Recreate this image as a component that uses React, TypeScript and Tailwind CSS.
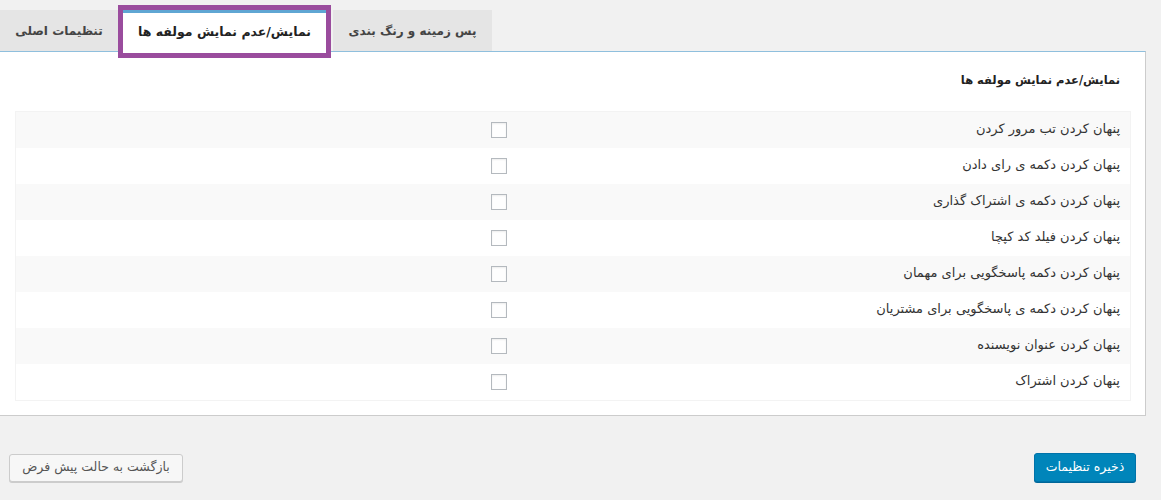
import React from 'react'

const rows = [
  'پنهان کردن تب مرور کردن',
  'پنهان کردن دکمه ی رای دادن',
  'پنهان کردن دکمه ی اشتراک گذاری',
  'پنهان کردن فیلد کد کپچا',
  'پنهان کردن دکمه پاسخگویی برای مهمان',
  'پنهان کردن دکمه ی پاسخگویی برای مشتریان',
  'پنهان کردن عنوان نویسنده',
  'پنهان کردن اشتراک',
]

const font = { fontFamily: '"DejaVu Sans", Tahoma, sans-serif' }

export default function App() {
  return (
    <div className="min-h-[500px] w-[1161px] bg-[#f1f1f1] text-[#333]" style={font}>
      {/* tabs */}
      <div className="flex items-end h-[51px] pt-[10px]">
        <div className="h-[41px] w-[118px] flex items-center justify-center bg-[#e5e5e5] text-[12px] font-bold text-[#444]">
          تنظیمات اصلی
        </div>
        <div className="relative ml-[4px] -mb-px h-[42px] w-[205px] flex items-center justify-center bg-white border-t-[3px] border-[#5fa6d3] text-[12.5px] font-bold text-[#222]">
          نمایش/عدم نمایش مولفه ها
          <div className="absolute left-[-4px] right-[-4px] top-[-8px] bottom-[-6px] border-[5px] border-[#9a4c9d]" />
        </div>
        <div className="ml-[6px] h-[41px] w-[159px] flex items-center justify-center bg-[#e5e5e5] text-[12px] font-bold text-[#444]">
          پس زمینه و رنگ بندی
        </div>
      </div>

      {/* panel */}
      <div dir="rtl" className="w-[1146px] bg-white border-t border-t-[#8fbfdd] border-r border-r-[#ccc] border-b border-b-[#ccc] pb-[14px]">
        <div className="h-[59px] flex items-center pr-[25px] pb-[2px] text-[11.5px] font-bold text-[#222]">
          نمایش/عدم نمایش مولفه ها
        </div>
        <div className="mr-[14px] w-[1116px] border border-[#f3f3f3]">
          {rows.map((r, i) => (
            <div key={r} className={`flex items-center h-[36px] ${i % 2 === 0 ? 'bg-[#f9f9f9]' : 'bg-white'}`}>
              <div className="w-[622px] pr-[10px] pb-[3px] text-[13px] text-[#333]">{r}</div>
              <div className="pr-[1px]">
                <div className="w-[16px] h-[16px] border border-[#b4b9be] bg-[#fefefe] shadow-[inset_0_1px_2px_rgba(0,0,0,0.07)]" />
              </div>
            </div>
          ))}
        </div>
      </div>

      {/* buttons */}
      <div dir="rtl" className="flex justify-between items-center mt-[37px] pr-[25px] pl-[9px]">
        <button className="h-[29px] w-[102px] rounded-[3px] bg-[#0085ba] border border-[#0073aa] text-white text-[12.5px] shadow-[0_1px_0_#006799]">
          ذخیره تنظیمات
        </button>
        <button className="h-[28px] w-[174px] rounded-[3px] bg-[#f7f7f7] border border-[#ccc] text-[#555] text-[12.5px] shadow-[0_1px_0_#ccc]">
          بازگشت به حالت پیش فرض
        </button>
      </div>
    </div>
  )
}
